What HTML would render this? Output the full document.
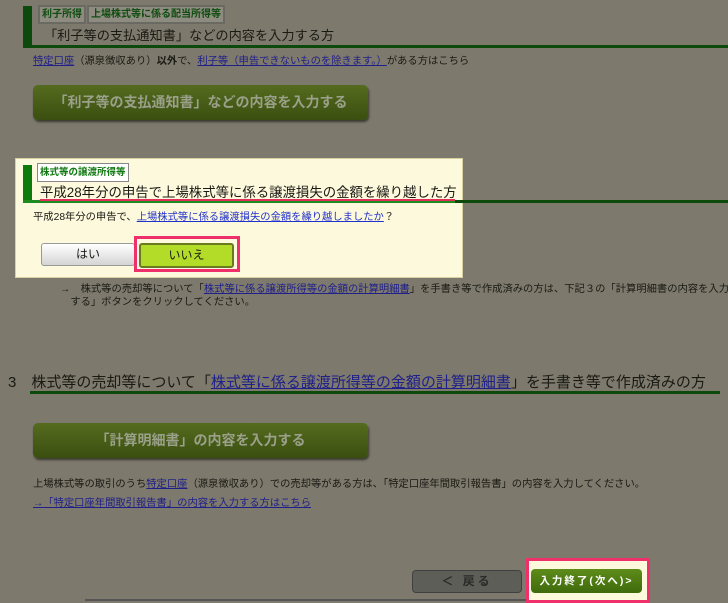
<!DOCTYPE html>
<html><head><meta charset="utf-8"><style>
body{margin:0;width:728px;height:603px;background:#7d796c;position:relative;overflow:hidden;font-family:"Liberation Sans","Noto Sans CJK JP",sans-serif;color:#1a1a14}
.a{position:absolute;white-space:nowrap}
.tab{position:absolute;background:#8e8b80;border:2px solid #6a6a62;color:#0f4d0f;font-size:10px;font-weight:bold;line-height:15px;padding:0 2px}
a{color:#20208a;text-decoration:underline}
.btn{position:absolute;border-radius:5px;background:linear-gradient(#556b1e,#3a4f10);box-shadow:1px 2px 2px #3a3a30;color:#9aa08a;font-weight:bold;font-size:14px;text-align:center;white-space:nowrap}
.s{font-size:10.3px}
</style></head><body>
<div class="a" style="left:23px;top:6px;width:9px;height:42px;background:#0c4a0c"></div>
<div class="a" style="left:23px;top:45px;width:705px;height:3px;background:#0c4a0c"></div>
<div class="tab" style="left:38px;top:5px">利子所得</div>
<div class="tab" style="left:87px;top:5px">上場株式等に係る配当所得等</div>
<div class="a" style="left:44px;top:25px;font-size:13.2px">「利子等の支払通知書」などの内容を入力する方</div>
<div class="a s" style="left:33px;top:52px"><a>特定口座</a>（源泉徴収あり）<b>以外</b>で、<a>利子等（申告できないものを除きます。）</a>がある方はこちら</div>
<div class="btn" style="left:33px;top:85px;width:335px;height:35px;line-height:35px">「利子等の支払通知書」などの内容を入力する</div>

<div class="a" style="left:15px;top:158px;width:448px;height:120px;background:#fdf9dd;border:1px solid #d8d0a0;box-sizing:border-box"></div>
<div class="a" style="left:23px;top:165px;width:9px;height:38px;background:#0c7a0c"></div>
<div class="a" style="left:23px;top:200px;width:705px;height:3px;background:#0c4a0c"></div>
<div class="a" style="left:23px;top:200px;width:432px;height:3px;background:#1f8a1f"></div>
<div class="a" style="left:40px;top:199px;width:415px;height:2px;background:#e0305a"></div>
<div class="a" style="left:37px;top:163px;border:1px solid #888;background:#fff;color:#127a12;font-size:9.5px;font-weight:bold;line-height:17px;padding:0 2px">株式等の譲渡所得等</div>
<div class="a" style="left:40px;top:181px;font-size:13.4px">平成28年分の申告で上場株式等に係る譲渡損失の金額を繰り越した方</div>
<div class="a s" style="left:33px;top:208px">平成28年分の申告で、<a style="color:#2233cc">上場株式等に係る譲渡損失の金額を繰り越しましたか</a>？</div>
<div class="a" style="left:41px;top:243px;width:94px;height:23px;border-radius:3px;background:linear-gradient(#fff,#d4d4d4);border:1px solid #999;box-sizing:border-box;text-align:center;line-height:21px;font-size:12px">はい</div>
<div class="a" style="left:134px;top:236px;width:106px;height:36px;border:3px solid #f0306a;box-sizing:border-box"></div>
<div class="a" style="left:139px;top:243px;width:95px;height:25px;border-radius:3px;background:#b2dc28;border:2px solid #6a7a20;box-sizing:border-box;text-align:center;line-height:21px;font-size:12px">いいえ</div>

<div class="a s" style="left:60px;top:283px;line-height:13px">→　株式等の売却等について「<a>株式等に係る譲渡所得等の金額の計算明細書</a>」を手書き等で作成済みの方は、下記３の「計算明細書の内容を入力<br>　する」ボタンをクリックしてください。</div>

<div class="a" style="left:8px;top:371px;font-size:15px">3　株式等の売却等について「<a>株式等に係る譲渡所得等の金額の計算明細書</a>」を手書き等で作成済みの方</div>
<div class="a" style="left:30px;top:391px;width:690px;height:3px;background:#0c4a0c"></div>
<div class="btn" style="left:33px;top:423px;width:335px;height:35px;line-height:35px">「計算明細書」の内容を入力する</div>
<div class="a s" style="left:33px;top:475px">上場株式等の取引のうち<a>特定口座</a>（源泉徴収あり）での売却等がある方は、「特定口座年間取引報告書」の内容を入力してください。</div>
<div class="a s" style="left:33px;top:494px"><a>→「特定口座年間取引報告書」の内容を入力する方はこちら</a></div>

<div class="a" style="left:85px;top:599px;width:445px;height:2px;background:#555"></div>
<div class="a" style="left:412px;top:570px;width:110px;height:23px;border-radius:4px;background:#5e5e58;border:1px solid #404040;box-sizing:border-box;color:#2a2a28;text-align:center;line-height:21px;font-size:12px;font-weight:bold;letter-spacing:3px">＜ 戻る</div>
<div class="a" style="left:526px;top:558px;width:124px;height:45px;background:#fdf9dd;border:3px solid #f0306a;box-sizing:border-box"></div>
<div class="a" style="left:531px;top:569px;width:111px;height:24px;border-radius:4px;background:linear-gradient(#5e8c1a,#3f6a0c);color:#fff;text-align:center;line-height:24px;font-size:10.5px;font-weight:bold;letter-spacing:2px">入力終了(次へ)&gt;</div>
</body></html>
